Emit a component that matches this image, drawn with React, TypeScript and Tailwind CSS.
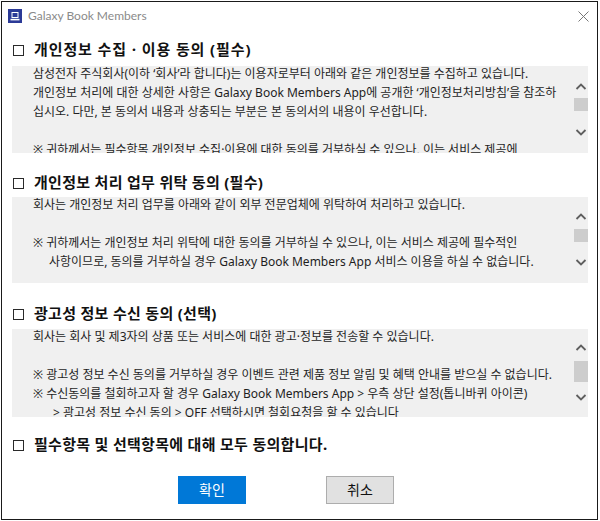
import React from 'react'

// consent dialog — three agreement blocks, "agree all" and OK / cancel

type Line = { text: string; indent?: string }

interface BoxProps {
  lines: Line[]
  boxClass: string
  barClass: string
  thumbClass: string
  downClass: string
}

function Check() {
  return <div className="w-[11px] h-[11px] border border-[#2a2a2a] bg-white shrink-0 mt-[2px]" />
}

function Chevron({ up }: { up?: boolean }) {
  return (
    <svg width="12" height="10" viewBox="0 0 12 10" className="text-[#5f5f5f]">
      <polyline
        points={up ? '1.5,7 6,2.5 10.5,7' : '1.5,3 6,7.5 10.5,3'}
        fill="none"
        stroke="currentColor"
        strokeWidth={1.8}
      />
    </svg>
  )
}

function Header({ title, className, textClass }: { title: string; className: string; textClass?: string }) {
  return (
    <div className={`flex items-center h-[20px] pl-[11px] gap-[10px] ${className}`}>
      <Check />
      <span className={`text-[15px] font-bold text-[#111] leading-[20px] whitespace-nowrap ${textClass ?? 'tracking-[0.3px]'}`}>
        {title}
      </span>
    </div>
  )
}

function TermsBox({ lines, boxClass, barClass, thumbClass, downClass }: BoxProps) {
  return (
    <div className={`ml-[10px] w-[576px] bg-[#f0f0f0] flex overflow-hidden ${boxClass}`}>
      <div className="flex-1 pl-[21px] -mt-[2px] text-[12px] leading-[19px] text-[#1e1e1e]">
        {lines.map((l, i) => (
          <div key={i} className={`whitespace-nowrap h-[19px] ${l.indent ?? ''}`}>
            {l.text}
          </div>
        ))}
      </div>
      <div className={`w-[15px] flex flex-col items-center shrink-0 ${barClass}`}>
        <Chevron up />
        <div className={`w-[14px] bg-[#cdcdcd] ${thumbClass}`} />
        <div className={downClass}>
          <Chevron />
        </div>
      </div>
    </div>
  )
}

const collect: Line[] = [
  { text: '삼성전자 주식회사(이하 ‘회사’라 합니다)는 이용자로부터 아래와 같은 개인정보를 수집하고 있습니다.' },
  { text: '개인정보 처리에 대한 상세한 사항은 Galaxy Book Members App에 공개한 ‘개인정보처리방침’을 참조하' },
  { text: '십시오. 다만, 본 동의서 내용과 상충되는 부분은 본 동의서의 내용이 우선합니다.' },
  { text: '' },
  { text: '※ 귀하께서는 필수항목 개인정보 수집·이용에 대한 동의를 거부하실 수 있으나, 이는 서비스 제공에' },
]

const entrust: Line[] = [
  { text: '회사는 개인정보 처리 업무를 아래와 같이 외부 전문업체에 위탁하여 처리하고 있습니다.' },
  { text: '' },
  { text: '※ 귀하께서는 개인정보 처리 위탁에 대한 동의를 거부하실 수 있으나, 이는 서비스 제공에 필수적인' },
  { text: '사항이므로, 동의를 거부하실 경우 Galaxy Book Members App 서비스 이용을 하실 수 없습니다.', indent: 'pl-[16px]' },
]

const marketing: Line[] = [
  { text: '회사는 회사 및 제3자의 상품 또는 서비스에 대한 광고·정보를 전송할 수 있습니다.' },
  { text: '' },
  { text: '※ 광고성 정보 수신 동의를 거부하실 경우 이벤트 관련 제품 정보 알림 및 혜택 안내를 받으실 수 없습니다.' },
  { text: '※ 수신동의를 철회하고자 할 경우 Galaxy Book Members App > 우측 상단 설정(톱니바퀴 아이콘)' },
  { text: '> 광고성 정보 수신 동의 > OFF 선택하시면 철회요청을 할 수 있습니다', indent: 'pl-[20px]' },
]

export default function App() {
  return (
    <div className="w-[600px] h-[521px] bg-white font-['Noto_Sans','Noto_Sans_CJK_KR',sans-serif]">
      <div className="ml-[1px] mt-[1px] w-[597px] h-[519px] border border-[#1a1a1a] flex flex-col">
        {/* title bar */}
        <div className="h-[27px] flex items-center pl-[6px] pr-[8px] shrink-0">
          <svg width="14" height="14" viewBox="0 0 14 14" className="shrink-0">
            <rect width="14" height="14" fill="#2b3a97" />
            <rect x="4" y="3.5" width="6" height="5" fill="none" stroke="#fff" strokeWidth="1" />
            <rect x="2.5" y="9.8" width="9" height="1.6" fill="#fff" />
          </svg>
          <span className="ml-[6px] text-[12px] text-[#8a8a8a] leading-none font-['Lato',sans-serif]">
            Galaxy Book Members
          </span>
          <svg width="11" height="11" viewBox="0 0 11 11" className="ml-auto mt-[1px]">
            <path d="M0.5 0.5 L10.5 10.5 M10.5 0.5 L0.5 10.5" stroke="#777" strokeWidth="1" />
          </svg>
        </div>

        <Header title="개인정보 수집ㆍ이용 동의 (필수)" className="mt-[10px]" textClass="tracking-[0.9px]" />
        <TermsBox
          lines={collect}
          boxClass="mt-[7px] h-[87px]"
          barClass="pt-[16px]"
          thumbClass="mt-[6px] h-[13px]"
          downClass="mt-[16px]"
        />

        <Header title="개인정보 처리 업무 위탁 동의 (필수)" className="mt-[19px]" />
        <TermsBox
          lines={entrust}
          boxClass="mt-[5px] h-[86px]"
          barClass="pt-[15px]"
          thumbClass="mt-[7px] h-[13px]"
          downClass="mt-[15px]"
        />

        <Header title="광고성 정보 수신 동의 (선택)" className="mt-[20px]" />
        <TermsBox
          lines={marketing}
          boxClass="mt-[6px] h-[88px]"
          barClass="pt-[14px]"
          thumbClass="mt-[8px] h-[21px]"
          downClass="mt-[10px]"
        />

        <Header title="필수항목 및 선택항목에 대해 모두 동의합니다." className="mt-[17px]" />

        {/* actions */}
        <div className="flex mt-[22px] pl-[176px] gap-[80px]">
          <button className="w-[68px] h-[28px] bg-[#0078d7] text-white text-[14px] leading-none">확인</button>
          <button className="w-[68px] h-[28px] bg-[#e1e1e1] border border-[#adadad] text-[#111] text-[14px] leading-none">
            취소
          </button>
        </div>
      </div>
    </div>
  )
}
